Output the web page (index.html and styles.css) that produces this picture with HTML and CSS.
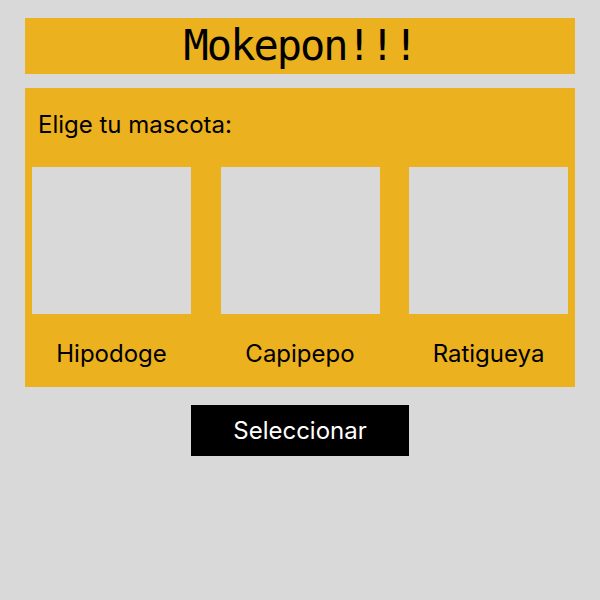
FILE: index.html
```html
<!DOCTYPE html>
<html lang="es">
<head>
<meta charset="utf-8">
<title>Mokepon</title>
<link rel="stylesheet" href="styles.css">
</head>
<body>
  <header class="title-bar">
    <h1 class="title">Mokepon!!!</h1>
  </header>
  <section class="pets">
    <p class="prompt">Elige tu mascota:</p>
    <div class="pet-grid">
      <div class="pet">
        <div class="pet-img"></div>
        <span class="pet-name">Hipodoge</span>
      </div>
      <div class="pet">
        <div class="pet-img"></div>
        <span class="pet-name">Capipepo</span>
      </div>
      <div class="pet">
        <div class="pet-img"></div>
        <span class="pet-name">Ratigueya</span>
      </div>
    </div>
  </section>
  <div class="actions">
    <button class="select-btn">Seleccionar</button>
  </div>
</body>
</html>
```
FILE: styles.css
```css
html, body {
  margin: 0;
  padding: 0;
  background: #d9d9d9;
}
body {
  padding: 18px 25px;
  font-family: Inter, "Noto Sans", sans-serif;
  color: #000;
}
.title-bar {
  background: #ebb11e;
  height: 56px;
  display: flex;
  align-items: center;
  justify-content: center;
}
.title {
  margin: 0;
  font-family: "DejaVu Sans Mono", monospace;
  font-weight: normal;
  font-size: 42px;
  letter-spacing: -2px;
  line-height: 1;
}
.pets {
  margin-top: 14px;
  background: #ebb11e;
  padding: 22px 7px 19px;
}
.prompt {
  margin: 0 0 28px 6px;
  font-size: 24px;
  line-height: 29px;
}
.pet-grid {
  display: grid;
  grid-template-columns: repeat(3, 159px);
  justify-content: space-between;
}
.pet {
  display: flex;
  flex-direction: column;
  align-items: center;
}
.pet-img {
  width: 159px;
  height: 147px;
  background: #d9d9d9;
}
.pet-name {
  margin-top: 25px;
  font-size: 24px;
  line-height: 29px;
}
.actions {
  display: flex;
  justify-content: center;
  margin-top: 18px;
}
.select-btn {
  width: 218px;
  height: 51px;
  border: none;
  background: #000;
  color: #fff;
  font-family: Inter, "Noto Sans", sans-serif;
  font-size: 24px;
  padding: 0;
}
```
